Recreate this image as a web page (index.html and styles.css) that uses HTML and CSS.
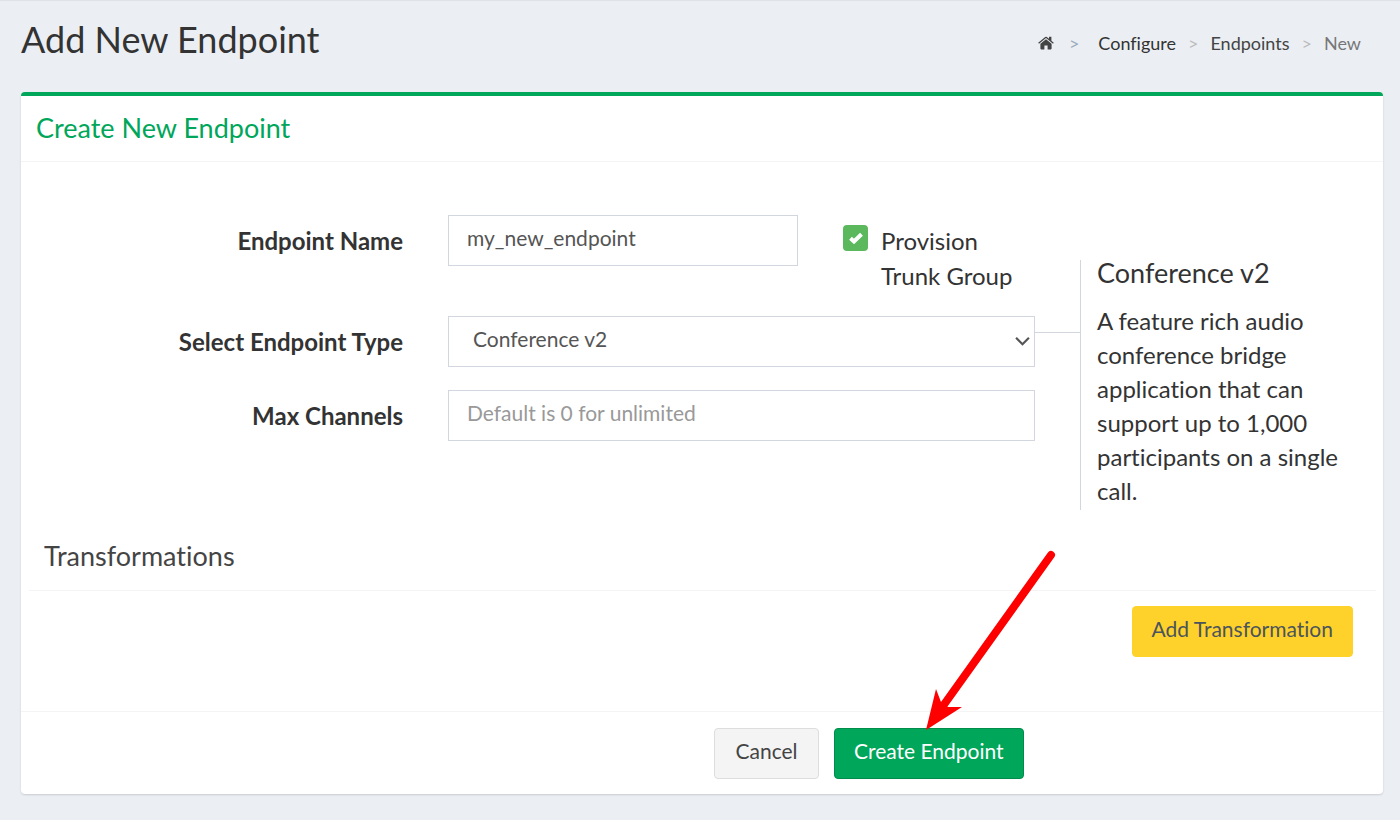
FILE: index.html
```html
<!DOCTYPE html>
<html lang="en">
<head>
<meta charset="utf-8">
<meta name="viewport" content="width=device-width, initial-scale=1">
<title>Add New Endpoint</title>
<link rel="stylesheet" href="styles.css">
</head>
<body>
<header class="page-header">
  <h1 class="page-title">Add New Endpoint</h1>
  <nav class="breadcrumb" aria-label="Breadcrumb">
    <a class="crumb crumb-home" href="#" aria-label="Home">
      <svg class="home-icon" viewBox="0 0 16 14" aria-hidden="true">
        <path d="M8 3.2 13.6 7.8V12.6Q13.6 13.4 12.8 13.4H9.6V9.4H6.4V13.4H3.2Q2.4 13.4 2.4 12.6V7.8Z"/>
        <path d="M.2 6.8 7.2 1Q8 .4 8.8 1L11 2.8V.7H13.4V4.8L15.8 6.8 15 7.8 8 2 1 7.8Z"/>
      </svg>
    </a>
    <span class="sep sep-home">&gt;</span>
    <a class="crumb crumb-strong" href="#">Configure</a>
    <span class="sep">&gt;</span>
    <a class="crumb" href="#">Endpoints</a>
    <span class="sep">&gt;</span>
    <span class="crumb crumb-current">New</span>
  </nav>
</header>
<main>
  <form class="card">
    <h2 class="card-title">Create New Endpoint</h2>
    <div class="fields">
      <label class="label" for="name">Endpoint Name</label>
      <input class="control" id="name" type="text" value="my_new_endpoint">
      <div class="provision">
        <span class="check">
          <input class="check-box" id="provision" type="checkbox" checked>
          <svg class="check-mark" viewBox="0 0 16 12" aria-hidden="true"><path d="M2.5 6.2 6 9.5 13.5 2.2"/></svg>
        </span>
        <label for="provision">Provision Trunk Group</label>
      </div>
      <label class="label" for="type">Select Endpoint Type</label>
      <div class="select-wrap wide">
        <select class="control control-select" id="type"><option>Conference v2</option></select>
        <svg class="chevron" viewBox="0 0 14 10" aria-hidden="true"><path d="M1 1.5 7 7.5 13 1.5"/></svg>
      </div>
      <label class="label" for="channels">Max Channels</label>
      <input class="control wide" id="channels" type="text" placeholder="Default is 0 for unlimited">
      <aside class="info">
        <h3 class="info-title">Conference v2</h3>
        <p class="info-text">A feature rich audio conference bridge application that can support up to 1,000 participants on a single call.</p>
      </aside>
    </div>
    <section class="transformations">
      <h3 class="section-title">Transformations</h3>
      <div class="section-actions">
        <button class="btn btn-warning" type="button">Add Transformation</button>
      </div>
    </section>
    <footer class="card-footer">
      <button class="btn btn-default" type="button">Cancel</button>
      <div class="create">
        <button class="btn btn-success" type="submit">Create Endpoint</button>
        <svg class="pointer" viewBox="920 545 140 190" aria-hidden="true">
          <path class="pointer-line" d="M1051 555 943 706"/>
          <path d="M926 730 936 689 941 702 948 707 962 707Z"/>
        </svg>
      </div>
    </footer>
  </form>
</main>
</body>
</html>
```
FILE: styles.css
```css
* { box-sizing: border-box; }
body {
  margin: 0;
  min-height: 100vh;
  background: #ebeff4;
  border-top: 1px solid #dfe3e8;
  color: #333;
  font-family: Lato, "Open Sans", sans-serif;
  font-size: 24px;
  font-variant-ligatures: none;
}
h1, h2, h3, p { margin: 0; font-weight: 400; }
input, select, button { font: inherit; font-variant-ligatures: none; }

.page-header {
  display: flex;
  justify-content: space-between;
  align-items: center;
  padding: 14px 39px 28px 21px;
}
.page-title { font-size: 36px; line-height: 49px; }
.breadcrumb {
  display: flex;
  align-items: center;
  font-size: 18px;
  line-height: 24px;
  padding-top: 7px;
}
.crumb { color: #444; text-decoration: none; }
.crumb-home { display: flex; }
.crumb-strong { color: #333; }
.crumb-current { color: #777; }
.sep { padding: 0 12px; color: #bbb; font-size: 18px; }
.sep-home { padding: 0 19px 0 15px; color: #9ab; }
.home-icon { width: 16px; height: 14px; fill: #444; }

.card {
  margin: 0 17px 26px 21px;
  background: #fff;
  border-top: 4px solid #00a65a;
  border-radius: 4px;
  box-shadow: 0 1px 2px rgba(0, 0, 0, .15);
}
.card-title {
  padding: 14px 15px 16px;
  color: #00a65a;
  font-size: 27px;
  line-height: 35px;
  border-bottom: 1px solid #f4f4f4;
}
.fields {
  display: grid;
  grid-template-columns: 382fr 350fr 192fr 303fr;
  grid-template-rows: auto auto 1fr;
  gap: 23px 45px;
  align-items: start;
  padding-top: 53px;
}
.label {
  grid-column: 1;
  text-align: right;
  font-weight: 700;
  line-height: 51px;
}
.control {
  display: block;
  width: 100%;
  height: 51px;
  padding: 0 18px 6px;
  border: 1px solid #d2d6de;
  border-radius: 0;
  background: #fff;
  color: #555;
  font-size: 21px;
}
.control::placeholder { color: #999; opacity: 1; }
.wide { grid-column: 2 / 4; }
.select-wrap { position: relative; }
.control-select { appearance: none; padding-left: 24px; }
.chevron {
  position: absolute;
  right: 5px;
  top: 20px;
  width: 15px;
  height: 11px;
  fill: none;
  stroke: #555;
  stroke-width: 2;
}
.provision {
  display: flex;
  gap: 13px;
  padding-top: 8px;
  line-height: 35px;
}
.check { position: relative; flex: none; width: 25px; height: 30px; }
.check-box {
  appearance: none;
  display: block;
  width: 25px;
  height: 26px;
  margin: 2px 0 0;
  border-radius: 4px;
  background: #5cb85c;
}
.check-mark {
  position: absolute;
  left: 5px;
  top: 9px;
  width: 16px;
  height: 12px;
  fill: none;
  stroke: #fff;
  stroke-width: 4;
  pointer-events: none;
}
.info {
  position: relative;
  grid-column: 4;
  grid-row: 1 / 4;
  margin-top: 45px;
  padding: 0 32px 2px 16px;
  border-left: 1px solid #d2d6de;
}
.info::before {
  content: "";
  position: absolute;
  right: 100%;
  top: 72px;
  width: 46px;
  border-top: 1px solid #d2d6de;
}
.info-title { font-size: 27px; line-height: 26px; padding-bottom: 18px; }
.info-text { line-height: 34px; }

.transformations { padding: 28px 7px 54px 8px; }
.section-title {
  padding: 0 15px 17px;
  color: #444;
  font-size: 27px;
  line-height: 35px;
  border-bottom: 1px solid #f4f4f4;
}
.section-actions {
  display: flex;
  justify-content: flex-end;
  padding: 15px 23px 0 0;
}
.btn {
  height: 51px;
  padding: 0 19px 6px;
  border: 1px solid;
  border-radius: 4px;
  font-size: 21px;
}
.btn-warning { background: #ffd22b; border-color: #ffd22b; color: #4b545c; }
.btn-default { min-width: 105px; background: #f4f4f4; border-color: #ddd; color: #444; }
.btn-success { background: #00a65a; border-color: #008d4c; color: #fff; }
.card-footer {
  display: grid;
  grid-template-columns: 798fr 549fr;
  justify-items: end;
  gap: 15px;
  padding: 16px 0 15px;
  border-top: 1px solid #f4f4f4;
}
.create { position: relative; justify-self: start; }
.pointer {
  position: absolute;
  left: 86px;
  bottom: 44px;
  width: 140px;
  height: 190px;
  fill: red;
  pointer-events: none;
}
.pointer-line { stroke: red; stroke-width: 8; stroke-linecap: round; }
```
